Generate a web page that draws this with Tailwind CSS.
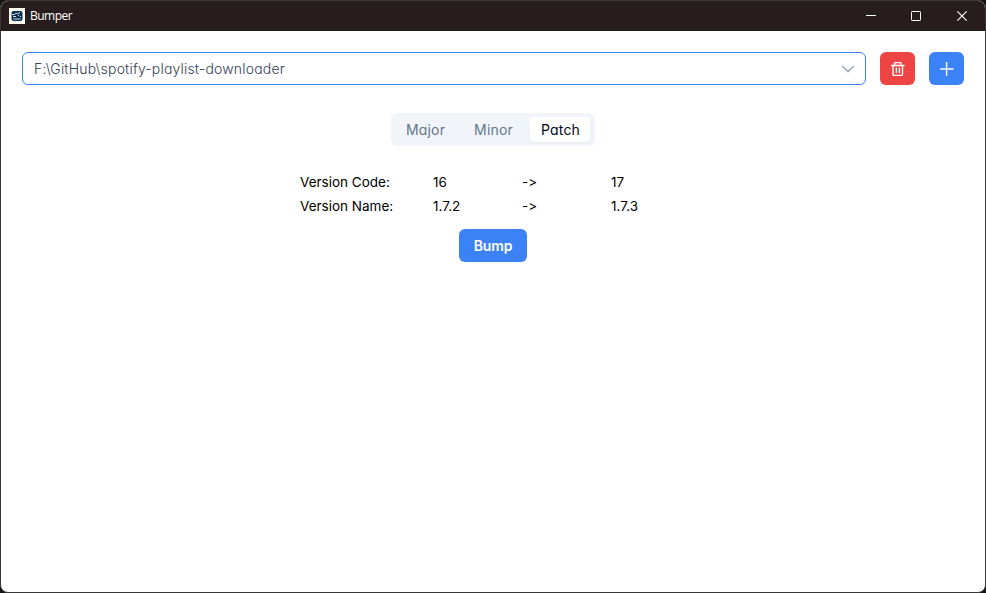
<!DOCTYPE html>
<html lang="en">
<head>
<meta charset="utf-8">
<title>Bumper</title>
<script src="https://cdn.jsdelivr.net/npm/@tailwindcss/browser@4"></script>
</head>
<body class="bg-[#151515]">
<div class="flex h-[593px] w-[986px] flex-col overflow-hidden rounded-lg border border-[#383636] bg-white font-['Inter',sans-serif] text-[14px] [font-feature-settings:'cv11']">
  <header class="flex h-[30px] shrink-0 items-center bg-[#271d1e] text-white">
    <div class="ml-2 grid size-4 place-items-center bg-[#fffef2]">
      <svg class="h-[10px] w-3" viewBox="0 0 12 10" fill="none"><rect x=".5" width="11" height="10" rx="2" fill="#0d3156"/><path d="M1 3.5h2.5L5 2l1.5 1L9 1.5M2 5.5h3M7 4.5h1M9 5.5h1M2.5 8h7" stroke="#d5dfe0" stroke-width="1"/></svg>
    </div>
    <h1 class="ml-[5px] font-['Open_Sans',sans-serif] text-[12px] tracking-[-0.5px]">Bumper</h1>
    <div class="mr-px ml-auto flex">
      <button class="grid h-[30px] w-[46px] place-items-center" aria-label="Minimize"><svg width="10" height="10" viewBox="0 0 10 10"><path d="M0 4.5h10" stroke="white"/></svg></button>
      <button class="grid h-[30px] w-[44px] place-items-center" aria-label="Maximize"><svg width="10" height="10" viewBox="0 0 10 10"><rect x=".5" y=".5" width="9" height="9" rx=".8" fill="none" stroke="white"/></svg></button>
      <button class="grid h-[30px] w-[46px] place-items-center pl-0.5" aria-label="Close"><svg width="10" height="10" viewBox="0 0 10 10"><path d="M.3.3l9.4 9.4M9.7.3L.3 9.7" stroke="white" stroke-width="1.1"/></svg></button>
    </div>
  </header>
  <main class="flex flex-col items-center px-[21px] pt-[21px]">
    <div class="flex w-full gap-[14px]">
      <div class="flex h-[33px] flex-1 items-center justify-between rounded-md border border-[#3b82f6] pr-[10px] pl-[11px] text-[#334155]">
        <span class="font-light tracking-[0.18px]">F:\GitHub\spotify-playlist-downloader</span>
        <svg width="14" height="14" viewBox="0 0 14 14" fill="none" stroke="#94a3b8" stroke-width="1.3" stroke-linecap="round" stroke-linejoin="round"><path d="M1.4 4.3 7 9.8l5.6-5.5"/></svg>
      </div>
      <button class="grid h-[33px] w-[35px] place-items-center rounded-md bg-[#ef4444]" aria-label="Delete"><svg width="14" height="14" viewBox="0 0 14 14" fill="none" stroke="white" stroke-width="1.4" stroke-linecap="round" stroke-linejoin="round"><path d="M.5 3.5h12.5M3.5 3.3V1.5q0-1 1-1h4.5q1 0 1 1v1.8M2 3.7v8.6q0 1.1 1.1 1.1h7.3q1.1 0 1.1-1.1V3.7M5.4 6.2v4.4M8.4 6.2v4.4"/></svg></button>
      <button class="grid h-[33px] w-[35px] place-items-center rounded-md bg-[#3b82f6]" aria-label="Add"><svg width="14" height="14" viewBox="0 0 14 14" stroke="white" stroke-width="1.5" stroke-linecap="round"><path d="M6.6.7v12.6M.5 7h12.5"/></svg></button>
    </div>
    <div class="mt-7 flex h-[33px] w-[204px] items-center rounded-md bg-[#f1f5f9] font-normal tracking-[0.18px] text-[#64748b]">
      <span class="w-[69px] text-center">Major</span>
      <span class="w-[67px] text-center">Minor</span>
      <span class="ml-[3px] grid h-[25px] w-[60px] place-items-center rounded bg-white pl-px text-[#020617] shadow-xs">Patch</span>
    </div>
    <div class="mt-6 grid w-[386px] grid-cols-[133px_89px_89px_75px] text-[13.5px] leading-6 text-black [font-feature-settings:'calt'_0]">
      <span>Version Code:</span><span>16</span><span>-&gt;</span><span>17</span>
      <span>Version Name:</span><span>1.7.2</span><span>-&gt;</span><span>1.7.3</span>
    </div>
    <button class="mt-[11px] h-[33px] w-[68px] rounded-md bg-[#3b82f6] font-semibold tracking-[-0.1px] text-white">Bump</button>
  </main>
</div>
</body>
</html>
